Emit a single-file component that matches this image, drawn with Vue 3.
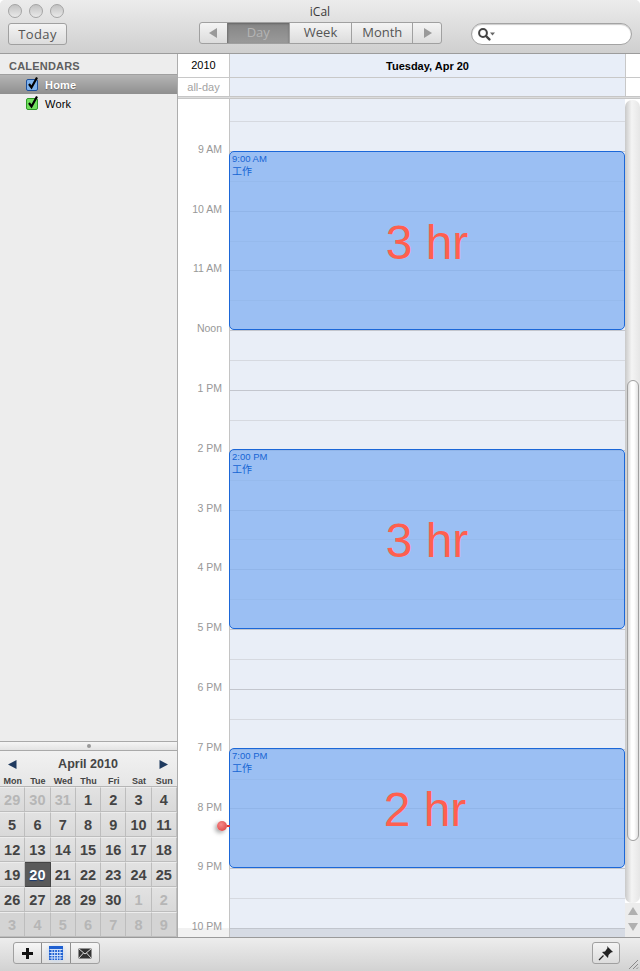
<script setup>
const hourLabels = ['9 AM','10 AM','11 AM','Noon','1 PM','2 PM','3 PM','4 PM','5 PM','6 PM','7 PM','8 PM','9 PM','10 PM']
const rows = Array.from({ length: 28 }, (_, i) => i)
const events = [
  { time: '9:00 AM', top: 52, height: 179, dur: '3 hr' },
  { time: '2:00 PM', top: 350, height: 180, dur: '3 hr' },
  { time: '7:00 PM', top: 649, height: 120, dur: '2 hr', shift: true },
]
const weekdays = ['Mon','Tue','Wed','Thu','Fri','Sat','Sun']
const prev = [29,30,31]
const days = []
prev.forEach(d => days.push({ d, out: true }))
for (let d = 1; d <= 30; d++) days.push({ d, sel: d === 20 })
for (let d = 1; d <= 9; d++) days.push({ d, out: true, last: d > 2 })
</script>

<template>
  <div class="window">
    <header class="toolbar">
      <div class="lights"><i></i><i></i><i></i></div>
      <div class="title">iCal</div>
      <div class="tools">
        <button class="today">Today</button>
        <div class="seg">
          <span class="seg-arrow"><svg width="9" height="10" viewBox="0 0 9 10"><path d="M8 0v10L0 5z" fill="#9a9a9a"/></svg></span>
          <span class="seg-item active">Day</span>
          <span class="seg-item">Week</span>
          <span class="seg-item">Month</span>
          <span class="seg-arrow"><svg width="9" height="10" viewBox="0 0 9 10"><path d="M1 0v10l8-5z" fill="#9a9a9a"/></svg></span>
        </div>
        <div class="search">
          <svg width="20" height="14" viewBox="0 0 20 14"><circle cx="6" cy="6" r="3.9" fill="none" stroke="#444" stroke-width="2"/><path d="M9 9l3.4 3.4" stroke="#444" stroke-width="2.4" stroke-linecap="round"/><path d="M13 5.500h5l-2.500 3z" fill="#666"/></svg>
        </div>
      </div>
    </header>

    <div class="main">
      <aside class="sidebar">
        <div class="cal-list">
          <div class="cal-head">CALENDARS</div>
          <div class="cal-row selected">
            <svg class="check" width="15" height="16" viewBox="0 0 15 16"><rect x="1.500" y="3.500" width="11" height="11" rx="1.500" fill="#7fb2ec" stroke="#1c4f9c"/><path d="M4 8l2.500 3.500L12 1.500" fill="none" stroke="#000" stroke-width="2.200"/></svg>
            <span>Home</span>
          </div>
          <div class="cal-row">
            <svg class="check" width="15" height="16" viewBox="0 0 15 16"><rect x="1.500" y="3.500" width="11" height="11" rx="1.500" fill="#72e05e" stroke="#2c9a26"/><path d="M4 8l2.500 3.500L12 1.500" fill="none" stroke="#000" stroke-width="2.200"/></svg>
            <span>Work</span>
          </div>
        </div>
        <div class="splitter"><i></i></div>
        <div class="mini">
          <div class="mini-title">
            <svg width="9" height="9" viewBox="0 0 9 9"><path d="M8.500 0v9L0 4.500z" fill="#1f3a5f"/></svg>
            <span>April 2010</span>
            <svg width="9" height="9" viewBox="0 0 9 9"><path d="M.5 0v9L9 4.500z" fill="#1f3a5f"/></svg>
          </div>
          <div class="mini-week"><span v-for="w in weekdays" :key="w">{{ w }}</span></div>
          <div class="mini-grid">
            <span v-for="(c, i) in days" :key="i" class="day" :class="{ out: c.out, sel: c.sel, last: i >= 35 }">{{ c.d }}</span>
          </div>
        </div>
      </aside>

      <section class="content">
        <div class="head-row h1">
          <div class="gutter-cell year">2010</div>
          <div class="day-cell date">Tuesday, Apr 20</div>
          <div class="end-cell"></div>
        </div>
        <div class="head-row h2">
          <div class="gutter-cell allday">all-day</div>
          <div class="day-cell"></div>
          <div class="end-cell"></div>
        </div>
        <div class="sep"></div>
        <div class="body">
          <div class="gutter">
            <div v-for="h in hourLabels" :key="h" class="hour">{{ h }}</div>
          </div>
          <div class="day-col">
            <div class="lead"></div>
            <div v-for="r in rows" :key="r" class="slot" :class="r % 2 ? 'half' : 'full'"></div>
            <div class="fade"></div>
          </div>
          <div v-for="e in events" :key="e.time" class="event" :style="{ top: e.top + 'px', height: e.height + 'px' }">
            <div class="ev-time">{{ e.time }}</div>
            <div class="ev-name">工作</div>
            <div class="ev-dur" :class="{ shifted: e.shift }">{{ e.dur }}</div>
          </div>
          <div class="now"><b></b><i></i></div>
          <div class="scroll">
            <div class="track"><div class="thumb"></div></div>
            <div class="arrows">
              <svg width="10" height="8" viewBox="0 0 10 8"><path d="M5 0l5 8H0z" fill="#b0b0b0"/></svg>
              <svg width="10" height="8" viewBox="0 0 10 8"><path d="M0 0h10L5 8z" fill="#b0b0b0"/></svg>
            </div>
          </div>
        </div>
      </section>
    </div>

    <footer class="bottom">
      <div class="foot-seg">
        <span class="foot-btn"><svg width="13" height="13" viewBox="0 0 13 13"><path d="M6.500 1v11M1 6.500h11" stroke="#111" stroke-width="3"/></svg></span>
        <span class="foot-btn"><svg width="15" height="15" viewBox="0 0 15 15"><rect x=".5" y=".5" width="13" height="13" fill="#1d5fd1" stroke="#1d5fd1"/><path d="M.5 3.500h13M.5 6.500h13M.5 9.500h13M.5 12h13M3 3v11M5.700 3v11M8.400 3v11M11 3v11" stroke="#cfe0fa" stroke-width="1"/></svg></span>
        <span class="foot-btn"><svg width="14" height="11" viewBox="0 0 14 11"><rect x=".5" y=".5" width="13" height="10" fill="#333"/><path d="M.5.5L7 6l6.500-5.500M.5 10.500L5.500 5M13.500 10.500L8.500 5" fill="none" stroke="#ddd"/></svg></span>
      </div>
      <button class="pin"><svg width="16" height="16" viewBox="0 0 16 16"><path d="M9 1l6 6-2 .5-2.500 2.500-.5 3-6-6 3-.5L9.500 3z" fill="#222"/><path d="M5.500 10.500L1 15" stroke="#222" stroke-width="1.300"/></svg></button>
      <svg class="grip" width="13" height="13" viewBox="0 0 13 13"><path d="M12 3L3 12M12 7l-5 5M12 10.500L10.500 12" stroke="#8a8a8a" fill="none"/></svg>
    </footer>
  </div>
</template>

<style scoped>
.window { width: 640px; height: 971px; display: flex; flex-direction: column; overflow: hidden; border-radius: 5px 5px 0 0; font-family: "Liberation Sans", Arial, sans-serif; background: #ededed; }
.toolbar { position: relative; height: 54px; flex: none; box-sizing: border-box; background: linear-gradient(#ececec, #cfcfcf); border-bottom: 1px solid #9c9c9c; padding: 4px 8px 0; }
.lights { position: absolute; left: 8px; top: 4px; display: flex; gap: 7px; }
.lights i { width: 14px; height: 14px; border-radius: 50%; box-sizing: border-box; border: 1px solid #a4a4a4; background: linear-gradient(#c2c2c2, #e9e9e9); }
.title { text-align: center; font: 12px "Open Sans", "DejaVu Sans", sans-serif; line-height: 16px; color: #3a3a3a; margin-bottom: 2px; }
.tools { display: flex; align-items: flex-start; }
.today { width: 59px; height: 22px; margin: 1px 132px 0 0; padding: 0; box-sizing: border-box; border: 1px solid #a0a0a0; border-radius: 3px; background: linear-gradient(#f4f4f4, #dcdcdc); font: 13px "Open Sans", "DejaVu Sans", sans-serif; letter-spacing: .4px; color: #555; line-height: 18px; }
.seg { display: flex; height: 22px; box-sizing: border-box; border: 1px solid #a0a0a0; border-radius: 3px; background: linear-gradient(#f4f4f4, #dcdcdc); width: 243px; margin-right: 29px; }
.seg-arrow { width: 27px; display: flex; align-items: center; justify-content: center; }
.seg-arrow:last-child { width: 28px; }
.seg-item { width: 63px; box-sizing: border-box; text-align: center; font: 13px/19px "Open Sans", "DejaVu Sans", sans-serif; color: #555; border-left: 1px solid #a0a0a0; }
.seg-item:nth-child(4) { width: 62px; border-right: 1px solid #a0a0a0; }
.seg-item.active { width: 62px; background: linear-gradient(#858585, #9a9a9a); color: #b4b4b4; border-left: 1px solid #777; box-shadow: inset 0 1px 2px #666; }
.search { width: 161px; height: 22px; margin-top: 1px; box-sizing: border-box; border: 1px solid #a3a3a3; border-radius: 11px; background: #fff; box-shadow: inset 0 1px 1px #ccc; padding: 3px 0 0 5px; display: flex; align-items: flex-start; }
.main { flex: 1; display: flex; min-height: 0; }
.sidebar { width: 178px; flex: none; box-sizing: border-box; border-right: 1px solid #adadad; background: #ededed; display: flex; flex-direction: column; }
.cal-list { flex: 1; }
.cal-head { height: 20px; padding-left: 9px; font-size: 11px; font-weight: bold; color: #5f5f5f; line-height: 25px; letter-spacing: .2px; }
.cal-row { height: 20px; display: flex; align-items: center; padding-left: 25px; gap: 5px; font-size: 11px; letter-spacing: .2px; color: #000; }
.cal-row .check { margin-top: -2px; }
.cal-row.selected { background: linear-gradient(#b5b5b5, #8f8f8f); border-top: 1px solid #a0a0a0; box-sizing: border-box; color: #fff; font-weight: bold; text-shadow: 0 1px 1px #666; }
.splitter { height: 10px; box-sizing: border-box; border-top: 1px solid #a9a9a9; border-bottom: 1px solid #a9a9a9; background: linear-gradient(#f5f5f5, #e3e3e3); display: flex; align-items: center; justify-content: center; }
.splitter i { width: 4px; height: 4px; border-radius: 50%; background: #999; }
.mini { height: 186px; flex: none; background: linear-gradient(#f1f1f1, #e6e6e6 36px); display: flex; flex-direction: column; }
.mini-title { height: 27px; display: flex; align-items: center; justify-content: space-between; padding: 0 9px 0 8px; font-size: 12.500px; font-weight: bold; color: #444; }
.mini-week { height: 9px; display: grid; grid-template-columns: repeat(7, 1fr); text-align: center; font-size: 9px; font-weight: bold; line-height: 9px; color: #444; }
.mini-grid { flex: 1; display: grid; grid-template-columns: repeat(7, 1fr); grid-template-rows: repeat(6, 25px); border-top: 1px solid #b5b5b5; box-sizing: border-box; }
.day { box-sizing: border-box; border-right: 1px solid #bdbdbd; border-bottom: 1px solid #bdbdbd; border-top: 1px solid #ededed; background: linear-gradient(#e2e2e2, #d9d9d9); display: flex; align-items: center; justify-content: center; padding-top: 1px; font-size: 14.500px; font-weight: bold; color: #444; }
.day.out { color: #b6b6b6; }
.day.last { background: #d4d4d4; }
.day.sel { background: #5a5a5a; color: #fff; text-shadow: 0 1px 1px #17386e; border-color: #444; }
.content { flex: 1; min-width: 0; display: flex; flex-direction: column; background: #fff; }
.head-row { display: flex; flex: none; border-bottom: 1px solid #c8c8c8; }
.h1 { height: 23px; }
.h2 { height: 18px; border-bottom: none; }
.gutter-cell { width: 52px; box-sizing: border-box; flex: none; text-align: center; border-right: 1px solid #c8c8c8; }
.year { font-size: 11px; line-height: 23px; color: #000; }
.allday { font-size: 11px; line-height: 19px; color: #a3a3a3; }
.day-cell { width: 396px; flex: none; box-sizing: border-box; background: #e8eef8; text-align: center; border-right: 1px solid #c8c8c8; }
.date { font-size: 11px; font-weight: bold; line-height: 25px; color: #000; }
.end-cell { flex: 1; }
.sep { height: 3px; flex: none; box-sizing: border-box; background: #dcdcdc; border-top: 1px solid #c6c6c6; border-bottom: 1px solid #c6c6c6; }
.body { position: relative; flex: 1; min-height: 0; display: flex; overflow: hidden; }
.gutter { width: 52px; flex: none; box-sizing: border-box; padding-top: 20px; border-right: 1px solid #c4c4c4; overflow: hidden; background: linear-gradient(#fff calc(100% - 9px), #f1f1f1 0); }
.hour { height: 59.800px; flex: none; display: flex; align-items: center; justify-content: flex-end; padding-right: 7px; font-size: 10.500px; color: #989898; }
.day-col { position: relative; width: 395px; flex: none; box-sizing: border-box; overflow: hidden; background: #e9eef7; }
.lead { height: 22px; box-sizing: border-box; }
.slot { height: 29.900px; box-sizing: border-box; border-top: 1px solid #d6d9e0; }
.slot.half { border-top-color: #c3c6ce; }
.fade { position: absolute; left: 0; right: 0; bottom: 0; height: 9px; background: rgba(190,195,205,.45); }
.event { position: absolute; left: 51px; width: 396px; box-sizing: border-box; border: 1px solid #1b67d8; border-radius: 5px; background: rgba(128,175,242,.75); padding: 2px 2px; display: flex; flex-direction: column; }
.ev-time { font-size: 9.500px; line-height: 10px; color: #1765d4; }
.ev-name { font: 10px/13px "Noto Sans CJK SC", sans-serif; color: #1765d4; }
.ev-dur { position: absolute; inset: 0; display: flex; align-items: center; justify-content: center; font-size: 48px; color: #ff5f4f; padding-top: 3px; }
.ev-dur.shifted { padding-right: 4px; }
.now { position: absolute; left: 39px; top: 722px; display: flex; align-items: center; }
.now b { width: 10px; height: 10px; border-radius: 50%; background: radial-gradient(circle at 40% 35%, #f58a8a, #d93a3a); box-shadow: -2px 2px 4px rgba(0,0,0,.35); }
.now i { width: 3px; height: 2px; background: #d93a3a; }
.scroll { flex: 1; display: flex; flex-direction: column; background: #fff; min-width: 0; }
.track { margin-top: 1px; height: 803px; flex: none; box-sizing: border-box; border-radius: 7px; background: linear-gradient(90deg, #c9c9c9, #f4f4f4 45%, #e6e6e6); padding-top: 280px; }
.thumb { height: 461px; margin: 0 1px 0 2px; box-sizing: border-box; border: 1px solid #a0a0a0; border-radius: 6px; background: linear-gradient(90deg, #dcdcdc, #fff 35%, #fff 60%, #e2e2e2); }
.arrows { flex: 1; display: flex; flex-direction: column; align-items: center; gap: 8px; padding-top: 4px; background: #ececec; }
.bottom { position: relative; height: 34px; flex: none; box-sizing: border-box; border-top: 1px solid #9a9a9a; background: linear-gradient(#ededed, #d2d2d2); display: flex; align-items: flex-start; justify-content: space-between; padding: 4px 20px 0 13px; }
.foot-seg { display: flex; height: 22px; box-sizing: border-box; border: 1px solid #a0a0a0; border-radius: 3px; background: linear-gradient(#f6f6f6, #dedede); }
.foot-btn { width: 29px; box-sizing: border-box; display: flex; align-items: center; justify-content: center; border-left: 1px solid #8e8e8e; }
.foot-btn:first-child { width: 27px; border-left: none; }
.foot-btn:nth-child(2) { background: radial-gradient(circle, #bcd5f5, transparent 70%); }
.pin { width: 28px; height: 22px; padding: 0; box-sizing: border-box; border: 1px solid #a0a0a0; border-radius: 3px; background: linear-gradient(#f4f4f4, #dcdcdc); display: flex; align-items: center; justify-content: center; }
.grip { position: absolute; right: 1px; bottom: 1px; }
</style>

<style>
html, body { background: #fff; }
</style>
